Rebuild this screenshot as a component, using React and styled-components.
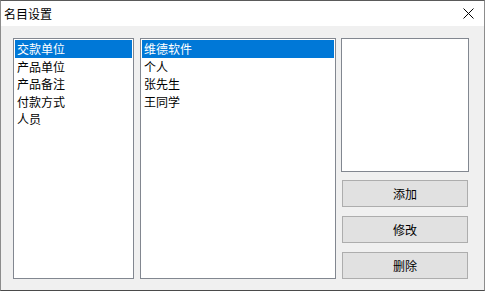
import React, { useState } from "react";
import styled, { createGlobalStyle } from "styled-components";

const GlobalStyle = createGlobalStyle`
  html, body {
    margin: 0;
    padding: 0;
    background: #f0f0f0;
  }
  body {
    font-family: "Noto Sans CJK SC", "Noto Sans", sans-serif;
    font-size: 12px;
  }
`;

const Window = styled.div`
  width: 485px;
  height: 291px;
  box-sizing: border-box;
  border: 1px solid #8c8c8c;
  border-top-color: #5a5a5a;
  border-bottom-color: #4a4a4a;
  background: #f0f0f0;
  display: flex;
  flex-direction: column;
`;

const TitleBar = styled.div`
  height: 25px;
  background: #fff;
  display: flex;
  align-items: center;
  justify-content: space-between;
  padding: 0 10px 0 3px;
  flex-shrink: 0;
`;

const Title = styled.span`
  font-size: 12px;
  color: #000;
  line-height: 1;
`;

const CloseBtn = styled.span`
  width: 12px;
  height: 12px;
  display: flex;
  align-items: center;
  justify-content: center;
`;

const Body = styled.div`
  flex: 1;
  display: flex;
  padding: 12px 15px 10px 12px;
  gap: 6px;
`;

const ListBox = styled.div`
  width: ${(p) => p.$w}px;
  height: 241px;
  box-sizing: border-box;
  border: 1px solid #828790;
  background: #fff;
  padding: 1px;
  overflow: hidden;
`;

const Item = styled.div`
  height: 17.5px;
  line-height: 17px;
  padding-left: 2px;
  color: ${(p) => (p.$sel ? "#fff" : "#000")};
  background: ${(p) => (p.$sel ? "#0078d7" : "transparent")};
  white-space: nowrap;
  cursor: default;
`;

const Side = styled.div`
  width: 128px;
  display: flex;
  flex-direction: column;
  margin-left: -1px;
`;

const Picture = styled.div`
  height: 134px;
  box-sizing: border-box;
  border: 1px solid #828790;
  background: #fff;
  margin-bottom: 8px;
`;

const Button = styled.button`
  height: 27px;
  margin: 0 1px 9px 1px;
  box-sizing: border-box;
  border: 1px solid #adadad;
  background: #e1e1e1;
  font-family: inherit;
  font-size: 12px;
  color: #000;
  padding: 0;
  &:last-child {
    margin-bottom: 0;
  }
`;

const groups = ["交款单位", "产品单位", "产品备注", "付款方式", "人员"];
const names = ["维德软件", "个人", "张先生", "王同学"];

export default function App() {
  const [g, setG] = useState(0);
  const [n, setN] = useState(0);
  return (
    <>
      <GlobalStyle />
      <Window>
        <TitleBar>
          <Title>名目设置</Title>
          <CloseBtn>
            <svg width="11" height="11" viewBox="0 0 11 11">
              <path d="M0.5 0.5L10.5 10.5M10.5 0.5L0.5 10.5" stroke="#000" strokeWidth="1" />
            </svg>
          </CloseBtn>
        </TitleBar>
        <Body>
          <ListBox $w={121}>
            {groups.map((t, i) => (
              <Item key={t} $sel={i === g} onClick={() => setG(i)}>
                {t}
              </Item>
            ))}
          </ListBox>
          <ListBox $w={196}>
            {names.map((t, i) => (
              <Item key={t} $sel={i === n} onClick={() => setN(i)}>
                {t}
              </Item>
            ))}
          </ListBox>
          <Side>
            <Picture />
            <Button>添加</Button>
            <Button>修改</Button>
            <Button>删除</Button>
          </Side>
        </Body>
      </Window>
    </>
  );
}
